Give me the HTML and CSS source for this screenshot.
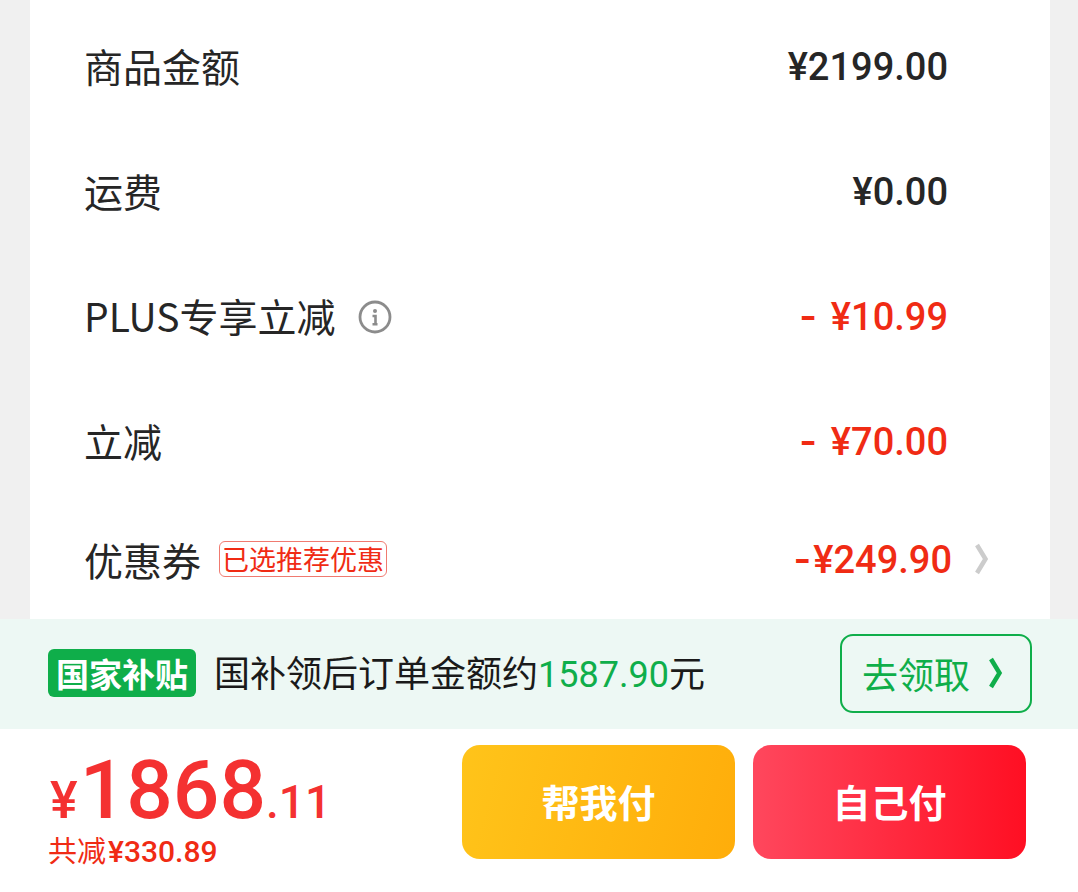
FILE: index.html
```
<!DOCTYPE html>
<html lang="zh-CN">

<head>
    <meta charset="UTF-8">
    <meta name="viewport"
          content="width=device-width, initial-scale=1.0">
    <title>确认订单</title>
    <link rel="stylesheet" href="styles.css">
</head>

<body>
    <main class="bill">
        <div class="row">
            <span class="label">商品金额</span>
            <span class="amount">¥2199.00</span>
        </div>
        <div class="row">
            <span class="label">运费</span>
            <span class="amount">¥0.00</span>
        </div>
        <div class="row">
            <span class="label">PLUS专享立减</span>
            <button class="info" type="button" aria-label="说明">
                <svg width="34" height="34" viewBox="0 0 34 34" fill="none">
                    <circle cx="17" cy="17" r="15" stroke="#8c8c8c" stroke-width="2.8" />
                    <circle cx="17" cy="11" r="2" fill="#8c8c8c" />
                    <path d="M14.5 16h3v8M14.5 24.3h5" stroke="#8c8c8c" stroke-width="2.6" />
                </svg>
            </button>
            <span class="amount minus"><span class="sign space">-</span>¥10.99</span>
        </div>
        <div class="row">
            <span class="label">立减</span>
            <span class="amount minus"><span class="sign space">-</span>¥70.00</span>
        </div>
        <a class="row coupon" href="#">
            <span class="label">优惠券</span>
            <span class="chosen">已选推荐优惠</span>
            <span class="amount minus"><span class="sign">-</span>¥249.90</span>
            <svg class="arrow" width="16" height="32" viewBox="0 0 16 32" fill="none">
                <path d="M3 2l8.5 14L3 30" stroke="#ccc" stroke-width="4.5" />
            </svg>
        </a>
    </main>

    <section class="subsidy">
        <span class="tag">国家补贴</span>
        <p class="tip">国补领后订单金额约<span class="num">1587.90</span>元</p>
        <button class="receive" type="button">
            去领取
            <svg width="16" height="32" viewBox="0 0 16 32" fill="none">
                <path d="M3 2l8.5 14L3 30" stroke="#0fae4a" stroke-width="4.5" />
            </svg>
        </button>
    </section>

    <footer class="pay">
        <div class="total">
            <p class="price"><span class="yen">¥</span><span class="int">1868</span><span class="dec">.11</span></p>
            <p class="saved">共减<span class="num">¥330.89</span></p>
        </div>
        <button class="btn help" type="button">帮我付</button>
        <button class="btn self" type="button">自己付</button>
    </footer>
</body>

</html>
```
FILE: styles.css
```
* {
    margin: 0;
    padding: 0;
    box-sizing: border-box;
}

body {
    background-color: #f0f0f0;
    color: #262626;
    font-family: "Noto Sans CJK SC", sans-serif;
}

button {
    border: 0;
    background: none;
    font-family: inherit;
    cursor: pointer;
}

svg {
    display: block;
}

.bill {
    margin: 0 28px 0 30px;
    padding-top: 5px;
    background-color: #fff;
}

.row {
    display: flex;
    align-items: center;
    height: 125px;
    padding: 0 102px 2px 54px;
    color: inherit;
    text-decoration: none;
}

.label {
    padding-bottom: 4px;
    font-size: 39px;
    line-height: 48px;
}

.info {
    margin-left: 22px;
}

.amount {
    margin-left: auto;
    font-family: Roboto, sans-serif;
    font-size: 38px;
    font-weight: 500;
    line-height: 48px;
}

.minus {
    color: #f02b14;
}

.sign {
    margin-right: 2px;
    font-family: Inter, sans-serif;
    font-weight: 600;
}

.space {
    margin-right: 14px;
}

.coupon {
    height: 114px;
    padding-right: 60px;
    padding-bottom: 6px;
}

.coupon .label {
    padding-bottom: 0;
}

.chosen {
    margin-left: 18px;
    padding: 0 2px;
    border: 1px solid #f07a70;
    border-radius: 6px;
    color: #f02b14;
    font-size: 27px;
    line-height: 34px;
}

.arrow {
    margin-left: 22px;
}

.subsidy {
    display: flex;
    align-items: center;
    height: 110px;
    padding: 0 46px 2px 48px;
    background-color: #edf8f4;
    color: #1a1a1a;
}

.tag {
    padding: 0 8px;
    border-radius: 6px;
    background-color: #0fae4a;
    color: #fff;
    font-size: 33px;
    font-weight: 700;
    line-height: 48px;
}

.tip {
    margin-left: 18px;
    font-size: 36px;
    line-height: 48px;
}

.num {
    font-family: Roboto, sans-serif;
}

.tip .num {
    color: #0fae4a;
}

.receive {
    display: flex;
    align-items: center;
    justify-content: space-between;
    width: 192px;
    height: 79px;
    margin-left: auto;
    padding: 0 26px 0 20px;
    border: 2px solid #0fae4a;
    border-radius: 13px;
    color: #0fae4a;
    font-size: 36px;
}

.pay {
    display: flex;
    gap: 18px;
    padding: 16px 52px 33px 48px;
    background-color: #fff;
}

.total {
    flex: 1;
    color: #f43131;
}

.price {
    display: flex;
    align-items: baseline;
    height: 86px;
    padding-top: 4px;
    font-family: Roboto, sans-serif;
    font-weight: 500;
    line-height: 1;
}

.yen {
    margin: 0 2px;
    font-size: 52px;
}

.int {
    font-size: 82px;
}

.dec {
    font-size: 46px;
}

.saved {
    color: #f02b14;
    font-size: 29px;
    line-height: 36px;
}

.saved .num {
    margin-left: 2px;
    font-size: 30px;
    font-weight: 500;
}

.btn {
    width: 273px;
    height: 114px;
    padding-bottom: 4px;
    border-radius: 18px;
    color: #fff;
    font-size: 38px;
    font-weight: 700;
}

.help {
    background-image: linear-gradient(105deg, #ffc41a, #ffad0a);
}

.self {
    background-image: linear-gradient(90deg, #ff475d, #ff0f23);
}
```
